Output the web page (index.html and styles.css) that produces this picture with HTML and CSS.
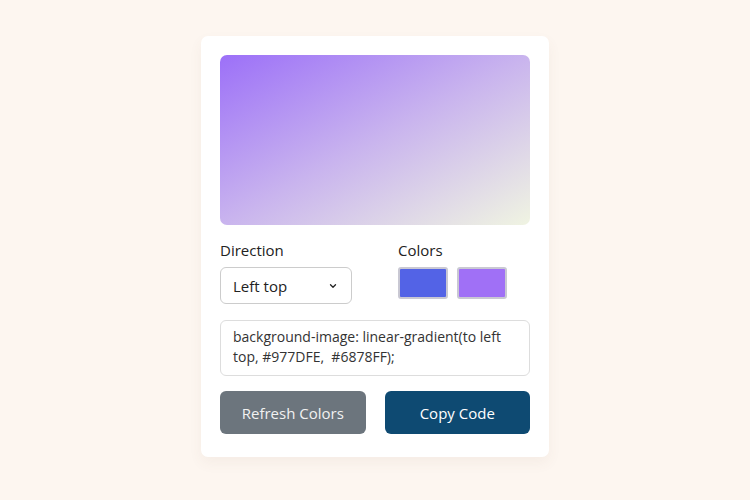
FILE: index.html
```html
<!DOCTYPE html>
<html lang="en">
<head>
    <meta charset="UTF-8">
    <meta name="viewport" content="width=device-width, initial-scale=1.0">
    <title>Gradient Generator</title>
    <link rel="stylesheet" href="styles.css">
</head>
<body>

    <div class="wrapper">
        <div class="gradient-box"></div>

        <div class="row options">
            <div class="column direction">
                <p>Direction</p>
                <div class="select-box">
                    <span>Left top</span>
                    <svg class="chevron" width="8" height="6" viewBox="0 0 8 6">
                        <path d="M1.5 1.8 L4 4.2 L6.5 1.8" fill="none" stroke="#222" stroke-width="1.3" stroke-linecap="round" stroke-linejoin="round"/>
                    </svg>
                </div>
            </div>
            <div class="column palette">
                <p>Colors</p>
                <div class="colors">
                    <span class="swatch swatch-one"></span>
                    <span class="swatch swatch-two"></span>
                </div>
            </div>
        </div>

        <div class="code">background-image: linear-gradient(to left top, #977DFE,&nbsp; #6878FF);</div>

        <div class="row buttons">
            <button class="refresh">Refresh Colors</button>
            <button class="copy">Copy Code</button>
        </div>
    </div>

</body>
</html>
```

FILE: styles.css
```css
* {
    box-sizing: border-box;
}

body {
    margin: 0;
    height: 100vh;
    display: flex;
    justify-content: center;
    align-items: flex-start;
    padding-top: 36px;
    background: #fdf6f0;
    font-family: "Open Sans", "Noto Sans", sans-serif;
    color: #222;
}

.wrapper {
    width: 348px;
    padding: 19px 19px 23px;
    background: #fff;
    border-radius: 7px;
    box-shadow: 0 6px 14px rgba(120, 90, 60, 0.06);
}

.gradient-box {
    height: 170px;
    border-radius: 7px;
    background: linear-gradient(to bottom right, #9c70f8, #c9b4ee 50%, #f0f4e2);
}

.row {
    display: flex;
}

.options {
    margin-top: 15px;
}

.column p {
    margin: 0 0 7px;
    font-size: 15px;
    line-height: 20px;
}

.direction {
    width: 178px;
}

.select-box {
    width: 132px;
    height: 37px;
    display: flex;
    align-items: center;
    justify-content: space-between;
    padding: 0 14px 0 12px;
    border: 1px solid #ccc;
    border-radius: 6px;
    font-size: 15px;
}

.colors {
    display: flex;
    gap: 9px;
}

.swatch {
    width: 50px;
    height: 32px;
    border: 2px solid #c9c8d3;
    border-radius: 3px;
}

.swatch-one {
    background: #5363e6;
}

.swatch-two {
    background: #a070f6;
}

.code {
    margin-top: 16px;
    height: 56px;
    padding: 6px 12px;
    border: 1px solid #ddd;
    border-radius: 6px;
    font-size: 14px;
    line-height: 20px;
    color: #333;
}

.buttons {
    margin-top: 15px;
    gap: 19px;
}

.buttons button {
    flex: 1;
    height: 43px;
    border: none;
    border-radius: 6px;
    font-family: inherit;
    font-size: 15px;
    cursor: pointer;
}

.refresh {
    background: #6c757d;
    color: #f1f1f1;
}

.copy {
    background: #0e4a72;
    color: #fff;
}
```
